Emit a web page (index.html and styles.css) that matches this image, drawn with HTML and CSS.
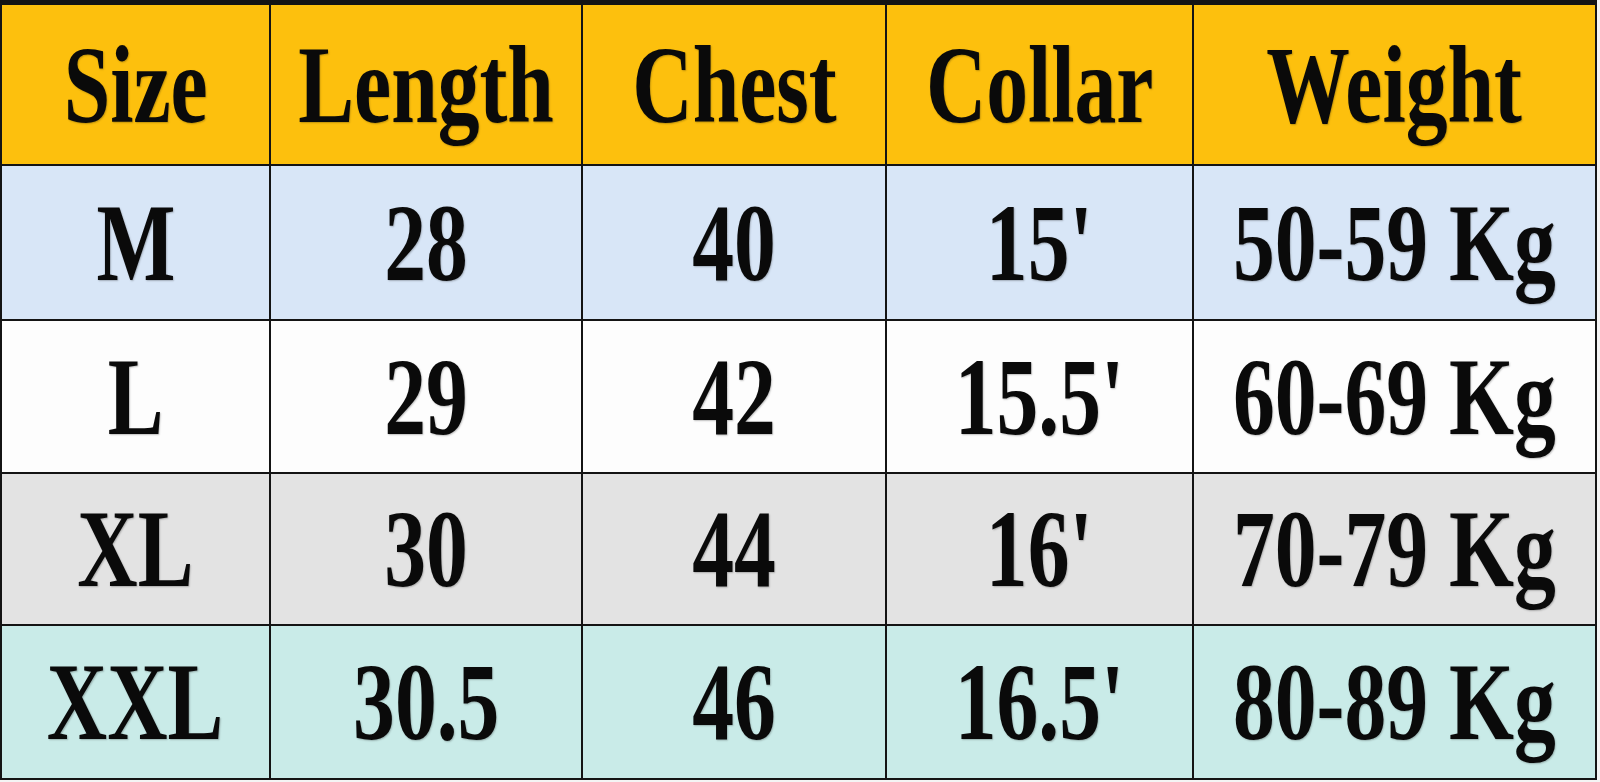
FILE: index.html
```html
<!DOCTYPE html>
<html lang="en">
<head>
<meta charset="utf-8">
<title>Size Chart</title>
<link rel="stylesheet" href="styles.css">
</head>
<body>
<div class="chart">
  <div class="cell head"><span class="t">Size</span></div>
  <div class="cell head"><span class="t">Length</span></div>
  <div class="cell head"><span class="t">Chest</span></div>
  <div class="cell head"><span class="t">Collar</span></div>
  <div class="cell head"><span class="t">Weight</span></div>

  <div class="cell blue"><span class="t">M</span></div>
  <div class="cell blue"><span class="t">28</span></div>
  <div class="cell blue"><span class="t">40</span></div>
  <div class="cell blue"><span class="t">15'</span></div>
  <div class="cell blue"><span class="t">50-59 Kg</span></div>

  <div class="cell white"><span class="t">L</span></div>
  <div class="cell white"><span class="t">29</span></div>
  <div class="cell white"><span class="t">42</span></div>
  <div class="cell white"><span class="t">15.5'</span></div>
  <div class="cell white"><span class="t">60-69 Kg</span></div>

  <div class="cell grey"><span class="t">XL</span></div>
  <div class="cell grey"><span class="t">30</span></div>
  <div class="cell grey"><span class="t">44</span></div>
  <div class="cell grey"><span class="t">16'</span></div>
  <div class="cell grey"><span class="t">70-79 Kg</span></div>

  <div class="cell teal"><span class="t">XXL</span></div>
  <div class="cell teal"><span class="t">30.5</span></div>
  <div class="cell teal"><span class="t">46</span></div>
  <div class="cell teal"><span class="t">16.5'</span></div>
  <div class="cell teal"><span class="t">80-89 Kg</span></div>
</div>
</body>
</html>
```
FILE: styles.css
```css
html, body {
  margin: 0;
  padding: 0;
  background: #f4f4f4;
}

.chart {
  width: 1597px;
  height: 780px;
  box-sizing: border-box;
  padding: 5px 2px 2px 2px;
  background: #141414;
  display: grid;
  grid-template-columns: 267px 310px 302px 305px 401px;
  grid-template-rows: 159px 153px 151px 150px 152px;
  gap: 2px;
  font-family: "Liberation Serif", "Times New Roman", serif;
  font-weight: 700;
  color: #0a0a0a;
}

.cell {
  display: flex;
  align-items: center;
  justify-content: center;
  font-size: 110px;
  line-height: 1;
  overflow: hidden;
}

.t {
  display: inline-block;
  white-space: nowrap;
  transform: scaleX(0.76);
  text-shadow: 1px 1px 2px rgba(0, 0, 0, 0.25);
}

.head { background: #fdc00d; }
.blue { background: #d8e6f7; }
.white { background: #fdfdfd; }
.grey { background: #e3e3e3; }
.teal { background: #c9ebe8; }
```
